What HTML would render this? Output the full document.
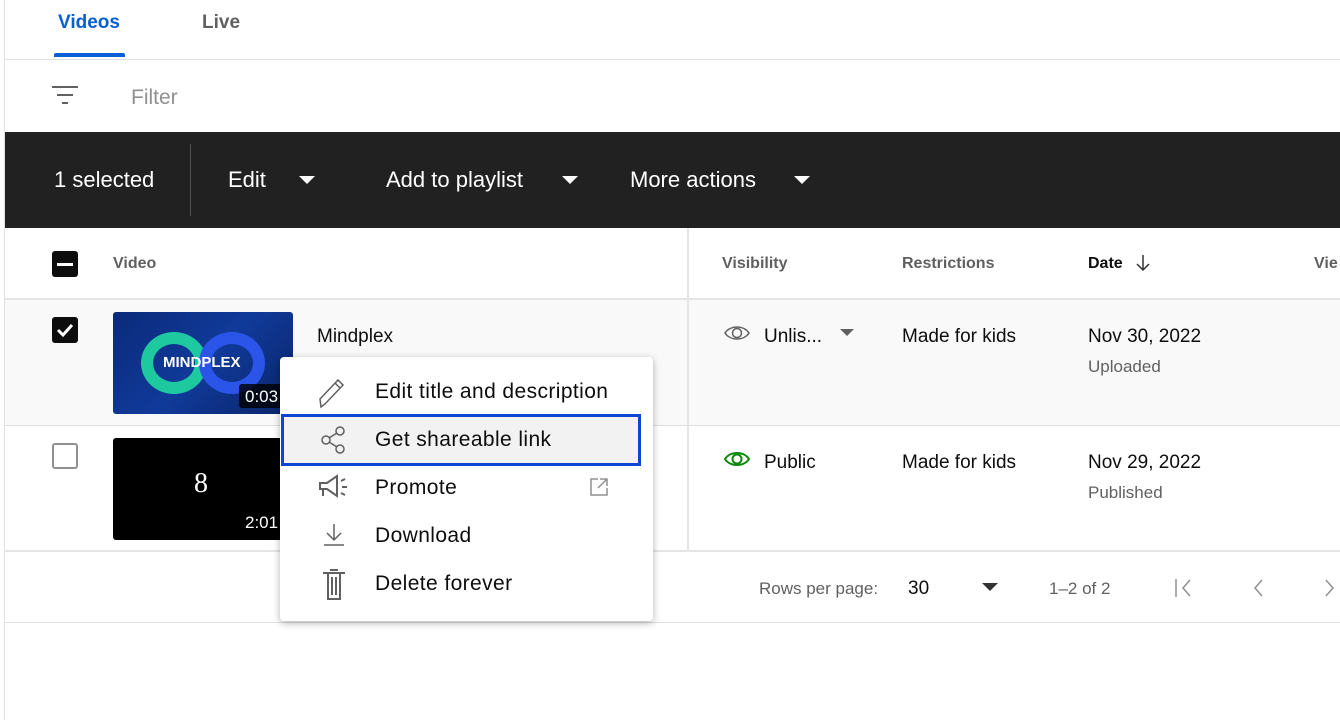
<!DOCTYPE html>
<html><head><meta charset="utf-8"><style>
*{margin:0;padding:0;box-sizing:border-box}
body{width:1340px;height:720px;overflow:hidden;background:#fff;font-family:"Liberation Sans",Roboto,sans-serif;position:relative;color:#0d0d0d}
.a{position:absolute}
.t{position:absolute;white-space:nowrap}
.m{font-size:21px;letter-spacing:0.4px}
</style></head><body>
<div class="a" style="left:4px;top:0;width:1px;height:720px;background:#e0e0e0"></div>
<div class="t" style="left:58px;top:12px;font-size:19px;font-weight:bold;color:#065fd4">Videos</div>
<div class="a" style="left:54px;top:53px;width:71px;height:4px;background:#065fd4;border-radius:2px 2px 0 0"></div>
<div class="t" style="left:202px;top:12px;font-size:19px;font-weight:bold;color:#606060">Live</div>
<div class="a" style="left:5px;top:59px;width:1335px;height:1px;background:#e0e0e0"></div>
<svg class="a" style="left:50px;top:84px" width="30" height="24"><path d="M2 3h26M7 11h16M12 19h6" stroke="#606060" stroke-width="2"/></svg>
<div class="t" style="left:131px;top:86px;font-size:21px;color:#909090">Filter</div>
<div class="a" style="left:5px;top:132px;width:1335px;height:96px;background:#212121"></div>
<div class="t" style="left:54px;top:167px;font-size:22px;color:#fff">1 selected</div>
<div class="a" style="left:190px;top:144px;width:1px;height:72px;background:#555"></div>
<div class="t" style="left:228px;top:167px;font-size:22px;color:#fff">Edit</div>
<div class="a" style="left:299px;top:176px;border:8px solid transparent;border-top:8px solid #fff;border-bottom:0"></div>
<div class="t" style="left:386px;top:167px;font-size:22px;color:#fff">Add to playlist</div>
<div class="a" style="left:562px;top:176px;border:8px solid transparent;border-top:8px solid #fff;border-bottom:0"></div>
<div class="t" style="left:630px;top:167px;font-size:22px;color:#fff">More actions</div>
<div class="a" style="left:794px;top:176px;border:8px solid transparent;border-top:8px solid #fff;border-bottom:0"></div>
<div class="a" style="left:52px;top:251px;width:26px;height:26px;background:#0d0d0d;border-radius:3px"></div>
<div class="a" style="left:57px;top:263px;width:16px;height:3px;background:#fff"></div>
<div class="t" style="left:113px;top:255px;font-size:16px;font-weight:bold;color:#606060">Video</div>
<div class="t" style="left:722px;top:255px;font-size:16px;font-weight:bold;color:#606060">Visibility</div>
<div class="t" style="left:902px;top:255px;font-size:16px;font-weight:bold;color:#606060">Restrictions</div>
<div class="t" style="left:1088px;top:255px;font-size:16px;font-weight:bold;color:#0d0d0d">Date</div>
<svg class="a" style="left:1134px;top:253px" width="18" height="20"><path d="M9 2v15M3 11l6 6 6-6" stroke="#333" stroke-width="1.5" fill="none"/></svg>
<div class="t" style="left:1314px;top:255px;font-size:16px;font-weight:bold;color:#606060">Vie</div>
<div class="a" style="left:5px;top:298px;width:1335px;height:2px;background:#e5e5e5"></div>
<div class="a" style="left:5px;top:300px;width:1335px;height:125px;background:#f9f9f9"></div>
<div class="a" style="left:5px;top:425px;width:1335px;height:1px;background:#e0e0e0"></div>
<div class="a" style="left:5px;top:550px;width:1335px;height:2px;background:#e5e5e5"></div>
<div class="a" style="left:687px;top:228px;width:2px;height:322px;background:#e5e5e5"></div>
<div class="a" style="left:52px;top:317px;width:26px;height:26px;background:#0d0d0d;border-radius:3px"></div>
<svg class="a" style="left:52px;top:317px" width="26" height="26"><path d="M6 13l5 5 9-10" stroke="#fff" stroke-width="3" fill="none"/></svg>
<div class="a" style="left:113px;top:312px;width:180px;height:102px;background:linear-gradient(135deg,#0b2a7a,#103a9a 50%,#0a2468);border-radius:3px;overflow:hidden">
<div class="a" style="left:28px;top:20px;width:66px;height:62px;border-radius:50%;border:12px solid #1fc9a0"></div>
<div class="a" style="left:86px;top:20px;width:66px;height:62px;border-radius:50%;border:12px solid #2a55e8"></div>
<div class="t" style="left:50px;top:42px;font-size:15px;font-weight:bold;color:#fff">MINDPLEX</div>
<div class="a" style="left:126px;top:72px;width:60px;height:24px;background:rgba(0,0,0,.8);border-radius:3px"></div>
<div class="t" style="left:132px;top:75px;font-size:17px;color:#fff">0:03</div>
</div>
<div class="t" style="left:317px;top:326px;font-size:19px">Mindplex</div>
<svg class="a" style="left:723px;top:322px" width="28" height="22"><path d="M2 11C7 3 21 3 26 11C21 19 7 19 2 11Z" stroke="#606060" stroke-width="1.5" fill="none"/><circle cx="14" cy="11" r="4.5" stroke="#606060" stroke-width="1.5" fill="none"/></svg>
<div class="t" style="left:764px;top:326px;font-size:19px">Unlis...</div>
<div class="a" style="left:840px;top:329px;border:7px solid transparent;border-top:7px solid #606060;border-bottom:0"></div>
<div class="t" style="left:902px;top:326px;font-size:19px">Made for kids</div>
<div class="t" style="left:1088px;top:326px;font-size:19px">Nov 30, 2022</div>
<div class="t" style="left:1088px;top:357px;font-size:17px;color:#606060">Uploaded</div>
<div class="a" style="left:52px;top:443px;width:26px;height:26px;border:2px solid #909090;border-radius:3px"></div>
<div class="a" style="left:113px;top:438px;width:180px;height:102px;background:#000;border-radius:3px">
<div class="t" style="left:81px;top:30px;font-size:28px;color:#fff;font-family:'Liberation Serif',serif">8</div>
<div class="t" style="left:132px;top:75px;font-size:17px;color:#fff">2:01</div>
</div>
<svg class="a" style="left:723px;top:448px" width="28" height="22"><path d="M2 11C7 3 21 3 26 11C21 19 7 19 2 11Z" stroke="#0a8a0a" stroke-width="2" fill="none"/><circle cx="14" cy="11" r="4.5" stroke="#0a8a0a" stroke-width="2" fill="none"/></svg>
<div class="t" style="left:764px;top:452px;font-size:19px">Public</div>
<div class="t" style="left:902px;top:452px;font-size:19px">Made for kids</div>
<div class="t" style="left:1088px;top:452px;font-size:19px">Nov 29, 2022</div>
<div class="t" style="left:1088px;top:483px;font-size:17px;color:#606060">Published</div>
<div class="t" style="left:759px;top:579px;font-size:17px;color:#606060">Rows per page:</div>
<div class="t" style="left:908px;top:578px;font-size:19px">30</div>
<div class="a" style="left:982px;top:583px;border:8px solid transparent;border-top:8px solid #333;border-bottom:0"></div>
<div class="t" style="left:1049px;top:579px;font-size:17px;color:#606060">1–2 of 2</div>
<svg class="a" style="left:1170px;top:576px" width="170" height="24"><path d="M6 3v18M20 4l-7 8 7 8M92 4l-7 8 7 8M156 4l7 8-7 8" stroke="#909090" stroke-width="1.5" fill="none"/></svg>
<div class="a" style="left:5px;top:622px;width:1335px;height:1px;background:#e0e0e0"></div>
<div class="a" style="left:280px;top:357px;width:373px;height:264px;background:#fff;border-radius:4px;box-shadow:0 2px 8px rgba(0,0,0,.3)"></div>
<div class="a" style="left:281px;top:414px;width:360px;height:52px;background:#f2f2f2;border:3px solid #0b47d1"></div>
<svg class="a" style="left:316px;top:375px" width="40" height="240" fill="none" stroke="#606060" stroke-width="1.5">
<path d="M5 32L4 24L22 5L27 10L9 29Z M19 8L24 13"/>
<circle cx="24" cy="56" r="4"/><circle cx="10" cy="65" r="4"/><circle cx="24" cy="74" r="4"/><path d="M13 63L21 58M13 67L21 72"/>
<path d="M4 108h7l10-7v20l-10-7H4Z M7 114v7M25 106l4-2M26 112h5M25 118l4 2" stroke-width="2"/>
<path d="M18 149v16M11 158l7 7 7-7M8 170h20"/>
<path d="M7 198h22M12 198v26h12v-26M14 195h8M16 202v18M20 202v18" stroke-width="2"/>
</svg>
<div class="t m" style="left:375px;top:380px">Edit title and description</div>
<div class="t m" style="left:375px;top:428px">Get shareable link</div>
<div class="t m" style="left:375px;top:476px">Promote</div>
<svg class="a" style="left:588px;top:476px" width="22" height="22" fill="none" stroke="#909090" stroke-width="1.5"><path d="M10 3H3v16h16v-7M12 3h7v7M19 3l-9 9"/></svg>
<div class="t m" style="left:375px;top:524px">Download</div>
<div class="t m" style="left:375px;top:572px">Delete forever</div>
</body></html>
